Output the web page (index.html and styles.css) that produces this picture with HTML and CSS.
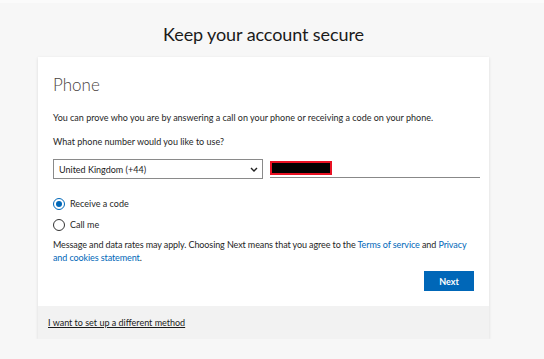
FILE: index.html
```html
<!DOCTYPE html>
<html><head>
<meta charset="utf-8">
<link rel="stylesheet" href="styles.css">
</head><body>
<div class="page">
	<h1 class="title">Keep your account secure</h1>
	<div class="card">
		<div class="card_body">
			<h2 class="method">Phone</h2>
			<p class="intro">You can prove who you are by answering a call on your phone or receiving a code on your phone.</p>
			<p class="question">What phone number would you like to use?</p>
			<div class="phone_row">
				<div class="country">
					<span>United Kingdom (+44)</span>
					<svg class="chevron" width="8" height="5" viewBox="0 0 8 5"><path d="M1 1l3 3 3-3" fill="none" stroke="#222" stroke-width="1.4"/></svg>
				</div>
				<div class="number"><span class="redacted"></span></div>
			</div>
			<div class="choices">
				<label class="choice"><span class="radio checked"></span>Receive a code</label>
				<label class="choice"><span class="radio"></span>Call me</label>
			</div>
			<p class="terms">Message and data rates may apply. Choosing Next means that you agree to the <a href="#">Terms of service</a> and <a href="#">Privacy and cookies statement</a>.</p>
			<div class="actions"><button class="next">Next</button></div>
		</div>
		<div class="card_foot"><a href="#">I want to set up a different method</a></div>
	</div>
</div>
</body></html>
```

FILE: styles.css
```css
html,body{margin:0;padding:0;}
body{background:#f7f7f7;border-top:3px solid #fbfbfb;font-family:Lato,"Noto Sans",sans-serif;color:#1b1b1b;}
p{margin:0;}
.page{width:451px;margin-left:38px;}
.title{margin:0;padding-top:18px;height:36px;font-size:18px;font-weight:400;letter-spacing:-0.1px;line-height:26px;text-align:center;color:#1b1b1b;}
.card{background:#fff;box-shadow:0 1px 3px rgba(0,0,0,0.12);}
.card_body{padding:15px 15px 15px 15px;}
.method{margin:0;font-size:17px;font-weight:300;line-height:26px;color:#4a4340;}
.intro{margin-top:14px;font-size:9px;line-height:12px;color:#262626;}
.question{margin-top:12px;font-size:9px;line-height:12px;color:#262626;}
.phone_row{display:flex;gap:7px;width:427px;margin-top:11px;}
.country{height:20px;border:1px solid #8a8a8a;display:flex;align-items:center;justify-content:space-between;padding:0 4px 0 5px;box-sizing:border-box;font-size:9px;color:#1b1b1b;width:210px;}
.number{flex:1;height:19px;border-bottom:1px solid #888;padding-top:2px;box-sizing:border-box;}
.redacted{display:block;width:58px;height:10px;background:#000;border:2px solid #e81123;}
.choices{margin-top:19px;display:flex;flex-direction:column;gap:9px;}
.choice{display:flex;align-items:center;gap:5px;font-size:9px;line-height:12px;color:#262626;}
.radio{width:10px;height:10px;border:1px solid #333;border-radius:50%;display:flex;align-items:center;justify-content:center;}
.radio.checked{border-color:#0067b8;}
.radio.checked::after{content:"";width:6px;height:6px;border-radius:50%;background:#0067b8;}
.terms{margin-top:7px;font-size:9px;line-height:13px;letter-spacing:-0.1px;color:#262626;}
.terms a{color:#0067b8;text-decoration:none;}
.actions{display:flex;justify-content:flex-end;margin-top:7px;}
.next{width:50px;height:20px;border:0;background:#0067b8;color:#fff;font-family:inherit;font-size:9px;font-weight:700;padding:0;}
.card_foot{background:#f2f2f2;height:33px;display:flex;align-items:center;padding-left:10px;}
.card_foot a{font-size:9px;color:#1b1b1b;}
```
